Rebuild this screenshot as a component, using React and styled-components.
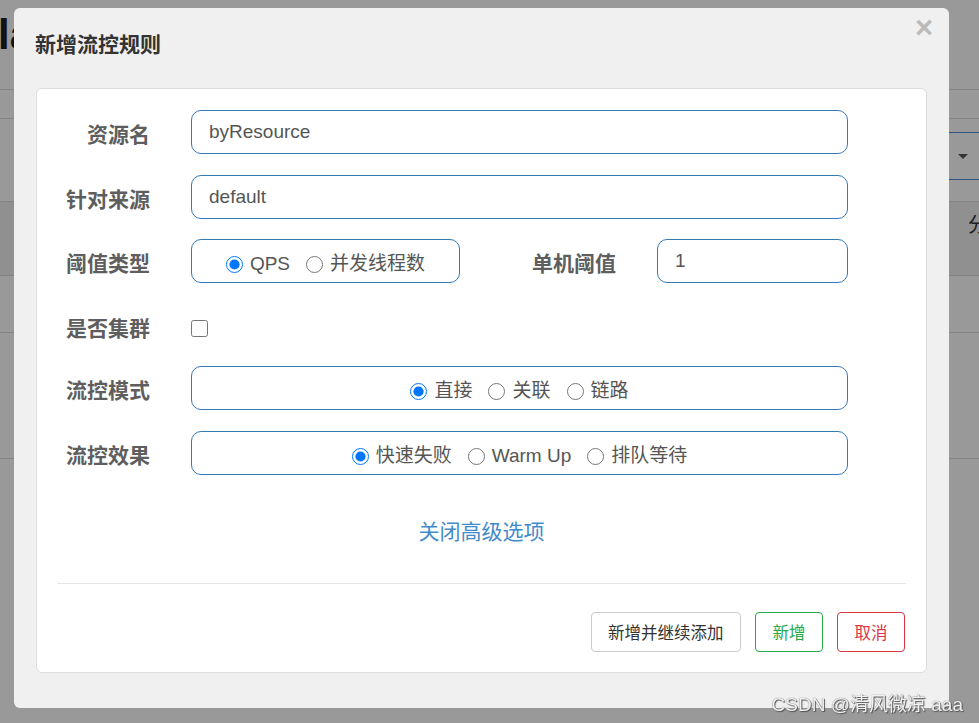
import React from 'react';
import styled, { createGlobalStyle } from 'styled-components';

const GlobalStyle = createGlobalStyle`
  html, body { margin: 0; padding: 0; overflow: hidden; background: #fff; }
  body { font-family: "Liberation Sans", "Noto Sans CJK SC", sans-serif; }
  * { box-sizing: border-box; }
`;

const FONT = `"Liberation Sans", "Noto Sans CJK SC", sans-serif`;

/* ---------- background page ---------- */
const Page = styled.div`
  width: 979px;
  height: 723px;
  overflow: hidden;
  position: relative;
  background: #fff;
`;

const PageHeader = styled.header`
  height: 90px;
  border-bottom: 1px solid #ddd;
  padding-top: 11px;
`;

const Brand = styled.h1`
  margin: 0 0 0 -2px;
  font-family: ${FONT};
  font-size: 42px;
  line-height: 48px;
  font-weight: 700;
  color: #1e1e1e;
`;

const Tabs = styled.div`
  height: 29px;
  border-bottom: 1px solid #ddd;
`;

const Toolbar = styled.div`
  height: 83px;
  padding-top: 13px;
  display: flex;
  justify-content: flex-end;
  border-bottom: 1px solid #ddd;
`;

const Select = styled.div`
  position: relative;
  width: 300px;
  height: 48px;
  margin-right: -10px;
  border: 1px solid #4a90d9;
  border-radius: 4px;
  &::after {
    content: "";
    position: absolute;
    right: 20px;
    top: 21px;
    border-left: 5px solid transparent;
    border-right: 5px solid transparent;
    border-top: 5px solid #555;
  }
`;

const TableHead = styled.div`
  height: 74px;
  background: #f0f0f0;
  border-bottom: 1px solid #ddd;
  display: grid;
  grid-template-columns: 958px 120px;
`;

const HeadCell = styled.div`
  padding: 7px 10px 0;
  font-family: ${FONT};
  font-size: 20px;
  color: #333;
  white-space: nowrap;
`;

const TableRow = styled.div`
  height: ${p => p.$h}px;
  border-bottom: 1px solid #ddd;
`;

const Backdrop = styled.div`
  position: fixed;
  inset: 0;
  background: rgba(0, 0, 0, 0.4);
`;

/* ---------- dialog ---------- */
const Dialog = styled.div`
  position: fixed;
  left: 14px;
  top: 8px;
  width: 935px;
  height: 700px;
  background: #f0f0f0;
  border-radius: 6px;
  padding: 22px 22px 0;
  display: flex;
  flex-direction: column;
`;

const DialogHeader = styled.div`
  height: 58px;
`;

const Title = styled.h4`
  margin: 0 0 0 -1px;
  font-family: ${FONT};
  font-size: 21px;
  line-height: 30px;
  font-weight: 700;
  color: #333;
`;

const Close = styled.button`
  position: absolute;
  top: 3px;
  right: 16px;
  border: 0;
  background: transparent;
  padding: 0;
  font-family: ${FONT};
  font-size: 31px;
  line-height: 34px;
  font-weight: 700;
  color: #bbb;
  cursor: pointer;
`;

const Card = styled.div`
  height: 585px;
  background: #fff;
  border: 1px solid #ddd;
  border-radius: 6px;
  padding: 21px 20px 0;
  display: flex;
  flex-direction: column;
`;

const Form = styled.div`
  display: flex;
  flex-direction: column;
  gap: 21px;
`;

const Row = styled.div`
  display: grid;
  grid-template-columns: 93px 657px;
  column-gap: 41px;
  min-height: ${p => p.$h || 44}px;
  height: ${p => p.$h || 44}px;
`;

const Label = styled.label`
  text-align: right;
  font-family: ${FONT};
  font-size: 21px;
  line-height: 30px;
  padding-top: 10px;
  font-weight: 700;
  color: #5e5e5e;
  white-space: nowrap;
`;

const Field = styled.div`
  display: flex;
  align-items: flex-start;
`;

const TextInput = styled.input`
  width: ${p => p.$w || '100%'};
  flex: none;
  height: 44px;
  border: 1px solid #337ab7;
  border-radius: 10px;
  padding: 0 17px;
  font-family: ${FONT};
  font-size: 19px;
  color: #555;
  background: #fff;
  outline: none;
`;

const RadioBox = styled.div`
  width: ${p => p.$w || '100%'};
  flex: none;
  height: 44px;
  border: 1px solid #337ab7;
  border-radius: 10px;
  display: flex;
  align-items: center;
  justify-content: center;
  gap: 16px;
  padding-top: 6px;
`;

const Option = styled.label`
  display: inline-flex;
  align-items: center;
  gap: 7px;
  font-family: ${FONT};
  font-size: 19px;
  line-height: 26px;
  color: #555;
  white-space: nowrap;
`;

const Radio = styled.input`
  width: 17px;
  height: 17px;
  margin: 0;
  accent-color: #0075ff;
`;

const SubLabel = styled(Label)`
  flex: 1;
  margin-right: 41px;
`;

const Checkbox = styled.input`
  width: 17px;
  height: 17px;
  margin: 16px 0 0;
`;

const Toggle = styled.a`
  display: block;
  margin-top: 42px;
  text-align: center;
  font-family: ${FONT};
  font-size: 21px;
  line-height: 30px;
  color: #428bca;
  text-decoration: none;
  cursor: pointer;
`;

const Divider = styled.hr`
  margin: 36px 0 0;
  border: 0;
  border-top: 1px solid #e5e5e5;
`;

const Footer = styled.div`
  margin-top: 28px;
  display: flex;
  justify-content: flex-end;
  gap: 14px;
  padding-right: 1px;
`;

const tones = {
  default: { c: '#333', b: '#ccc' },
  success: { c: '#28a745', b: '#28a745' },
  danger: { c: '#dc3545', b: '#dc3545' },
};

const Button = styled.button`
  height: 40px;
  padding: 0 16.5px;
  background: #fff;
  border: 1px solid ${p => tones[p.$tone].b};
  border-radius: 4px;
  color: ${p => tones[p.$tone].c};
  font-family: ${FONT};
  font-size: 16.5px;
  cursor: pointer;
`;

const Watermark = styled.div`
  position: fixed;
  right: 16px;
  bottom: 7px;
  font-family: ${FONT};
  font-size: 19px;
  line-height: 22px;
  color: rgba(255, 255, 255, 0.92);
  text-shadow: 0 0 1px #444, 1px 1px 1px #555;
  white-space: nowrap;
`;

function RadioGroup({ name, options, checked, width }) {
  return (
    <RadioBox $w={width}>
      {options.map(o => (
        <Option key={o}>
          <Radio type="radio" name={name} defaultChecked={o === checked} />
          {o}
        </Option>
      ))}
    </RadioBox>
  );
}

export default function App() {
  return (
    <>
      <GlobalStyle />
      <Page>
        <PageHeader>
          <Brand>la</Brand>
        </PageHeader>
        <Tabs />
        <Toolbar>
          <Select />
        </Toolbar>
        <TableHead>
          <HeadCell />
          <HeadCell>分组</HeadCell>
        </TableHead>
        <TableRow $h={57} />
        <TableRow $h={126} />
      </Page>
      <Backdrop />
      <Dialog>
        <Close aria-label="close">×</Close>
        <DialogHeader>
          <Title>新增流控规则</Title>
        </DialogHeader>
        <Card>
          <Form>
            <Row>
              <Label>资源名</Label>
              <Field>
                <TextInput defaultValue="byResource" />
              </Field>
            </Row>
            <Row $h={43}>
              <Label>针对来源</Label>
              <Field>
                <TextInput defaultValue="default" />
              </Field>
            </Row>
            <Row>
              <Label>阈值类型</Label>
              <Field>
                <RadioGroup name="grade" options={['QPS', '并发线程数']} checked="QPS" width="269px" />
                <SubLabel>单机阈值</SubLabel>
                <TextInput $w="191px" defaultValue="1" />
              </Field>
            </Row>
            <Row $h={41}>
              <Label>是否集群</Label>
              <Field>
                <Checkbox type="checkbox" />
              </Field>
            </Row>
            <Row>
              <Label>流控模式</Label>
              <Field>
                <RadioGroup name="strategy" options={['直接', '关联', '链路']} checked="直接" />
              </Field>
            </Row>
            <Row>
              <Label>流控效果</Label>
              <Field>
                <RadioGroup name="behavior" options={['快速失败', 'Warm Up', '排队等待']} checked="快速失败" />
              </Field>
            </Row>
          </Form>
          <Toggle>关闭高级选项</Toggle>
          <Divider />
          <Footer>
            <Button $tone="default">新增并继续添加</Button>
            <Button $tone="success">新增</Button>
            <Button $tone="danger">取消</Button>
          </Footer>
        </Card>
      </Dialog>
      <Watermark>CSDN @清风微凉 aaa</Watermark>
    </>
  );
}
